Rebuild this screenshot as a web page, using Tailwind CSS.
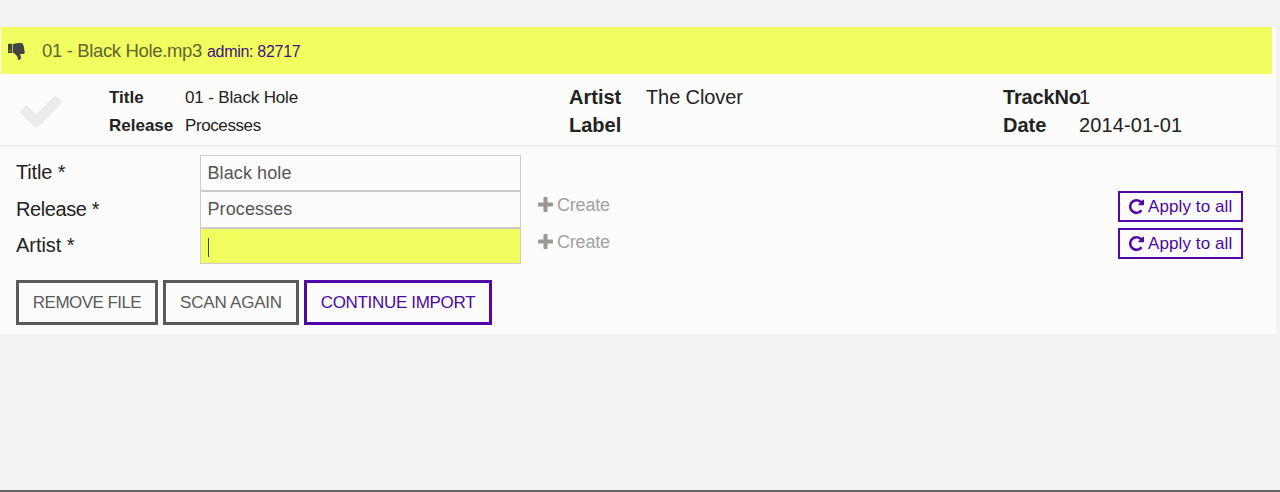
<!DOCTYPE html>
<html lang="en"><head><meta charset="utf-8"><title>Import</title>
<script src="https://cdn.jsdelivr.net/npm/@tailwindcss/browser@4"></script></head>
<body class="bg-[#f2f2f2] font-['Liberation_Sans',Arial,sans-serif] text-[#222] whitespace-nowrap">
<svg class="hidden">
<symbol id="check" viewBox="0 0 1792 1792"><path d="M1671 566q0 40-28 68l-724 724-136 136q-28 28-68 28t-68-28l-136-136-362-362q-28-28-28-68t28-68l136-136q28-28 68-28t68 28l294 295 656-657q28-28 68-28t68 28l136 136q28 28 28 68z"/></symbol>
<symbol id="plus" viewBox="192 128 1408 1408"><path d="M1600 736v192q0 40-28 68t-68 28h-416v416q0 40-28 68t-68 28h-192q-40 0-68-28t-28-68v-416h-416q-40 0-68-28t-28-68v-192q0-40 28-68t68-28h416v-416q0-40 28-68t68-28h192q40 0 68 28t28 68v416h416q40 0 68 28t28 68z"/></symbol>
<symbol id="repeat" viewBox="128 128 1536 1536"><path d="M1664 256v448q0 26-19 45t-45 19h-448q-42 0-59-40-17-39 14-69l138-138q-148-137-349-137-104 0-198.5 40.5t-163.5 109.5-109.5 163.5-40.5 198.5 40.5 198.5 109.5 163.5 163.5 109.5 198.5 40.5q119 0 225-52t179-147q7-10 23-12 15 0 25 9l137 138q9 8 9.5 20.5t-7.5 22.5q-109 132-264 204.5t-327 72.5q-156 0-298-61t-245-164-164-245-61-298 61-298 164-245 245-164 298-61q147 0 284.5 55.5t244.5 156.5l130-129q29-31 70-14 39 17 39 59z"/></symbol>
</svg>
<div class="flex h-[492px] flex-col border-b-2 border-[#646466] pt-[27px]">
  <main class="w-[1276px] bg-[#fcfcfc]">
    <header class="ml-px flex h-[47px] w-[1271px] items-center bg-[#f0ff5f] pl-[7px]">
      <svg class="mt-[2px] h-[17px] w-[17px]" viewBox="0 0 17 16" preserveAspectRatio="none" fill="#444"><path d="M0 1.2Q0 .6.6.6H4v8.9H.6Q0 9.500 0 8.900zM4.700.9C7 .9 8.500-.1 11 0h1.700c1.700 0 2.600.9 2.500 2.200.8.600.9 1.500.6 2.400.7.800.8 1.700.3 2.500 1.400 1.500.4 3.200-1.100 3.200h-3c.4 1.200 1 2.200.9 3.600 0 1.500-1 2.100-2.300 2-.9-.5-.7-1.700-1.100-2.800-.4-1.200-1.500-1.700-2.100-2.600C6.600 9.700 5.900 9.300 4.700 9.300z"/><path d="M1.200 6.700h1.500v1.500H1.200z" fill="#888a48"/></svg>
      <span class="ml-[17px] w-[165px] pt-px text-[18.5px] tracking-[-0.35px] text-[#62652f]">01 - Black Hole.mp3</span>
      <span class="mt-[2px] text-[16px] tracking-[-0.3px] text-[#45107e]">admin: 82717</span>
    </header>
    <section class="flex h-[73px] border-b-2 border-[#ededed] pt-[10px] leading-[27.500px]">
      <div class="w-[109px] pl-[17px]"><svg class="mt-[3px] h-[48px] w-[48px]" fill="#ebebeb"><use href="#check"/></svg></div>
      <dl class="grid h-[55px] w-[460px] grid-cols-[76px_1fr] text-[17px]">
        <dt class="font-bold">Title</dt><dd class="tracking-[-0.15px]">01 - Black Hole</dd>
        <dt class="font-bold">Release</dt><dd class="tracking-[-0.4px]">Processes</dd>
      </dl>
      <dl class="grid h-[55px] w-[434px] grid-cols-[77px_1fr] text-[20px]">
        <dt class="font-bold">Artist</dt><dd class="tracking-[-0.1px]">The Clover</dd>
        <dt class="font-bold">Label</dt><dd></dd>
      </dl>
      <dl class="grid h-[55px] grid-cols-[76px_1fr] text-[20px]">
        <dt class="font-bold tracking-[-0.15px]">TrackNo</dt><dd>1</dd>
        <dt class="font-bold">Date</dt><dd class="tracking-[0.1px]">2014-01-01</dd>
      </dl>
    </section>
    <form class="h-[187px] px-4 pt-[8px]">
      <div class="flex h-[36px]">
        <label class="w-[184px] text-[20px] leading-[35px] tracking-[-0.15px]">Title *</label>
        <div class="h-[36px] w-[321px] border border-[#ccc] pl-[6.500px] text-[18px] leading-[34px] tracking-[0.1px] text-[#555]">Black hole</div>
      </div>
      <div class="flex h-[37px]">
        <label class="w-[184px] pt-px text-[20px] leading-[35px] tracking-[-0.4px]">Release *</label>
        <div class="h-[37px] w-[321px] border border-[#ccc] pl-[6.500px] text-[18px] leading-[35px] tracking-[0.1px] text-[#555]">Processes</div>
        <span class="ml-[17px] flex h-[28px] items-center gap-[4px] text-[18px] tracking-[-0.2px] text-[#a2a2a2]"><svg class="mb-[2px] h-[15px] w-[15px]" fill="#999"><use href="#plus"/></svg>Create</span>
        <button type="button" class="mr-[17px] ml-auto flex h-[31px] w-[125px] items-center gap-[4px] border-2 border-[#5208a8] pl-[9px] text-[17px] tracking-[0.1px] text-[#4b0a9e]"><svg class="h-[15px] w-[15px]" fill="#5208a8"><use href="#repeat"/></svg>Apply to all</button>
      </div>
      <div class="flex h-[36px]">
        <label class="w-[184px] text-[20px] leading-[35px] tracking-[-0.05px]">Artist *</label>
        <div class="flex h-[36px] w-[321px] items-center border border-[#ccc] bg-[#f0ff5f] pl-[7px]"><i class="mt-[2px] h-[19px] w-px bg-[#444]"></i></div>
        <span class="ml-[17px] flex h-[28px] items-center gap-[4px] text-[18px] tracking-[-0.2px] text-[#a2a2a2]"><svg class="mb-[2px] h-[15px] w-[15px]" fill="#999"><use href="#plus"/></svg>Create</span>
        <button type="button" class="mr-[17px] ml-auto flex h-[31px] w-[125px] items-center gap-[4px] border-2 border-[#5208a8] pl-[9px] text-[17px] tracking-[0.1px] text-[#4b0a9e]"><svg class="h-[15px] w-[15px]" fill="#5208a8"><use href="#repeat"/></svg>Apply to all</button>
      </div>
      <div class="mt-[16px] flex text-[17px] text-[#5a5a5a]">
        <button type="button" class="h-[45px] w-[142px] border-3 border-[#5a5a5a] tracking-[-0.55px]">REMOVE FILE</button>
        <button type="button" class="ml-[5px] h-[45px] w-[136px] border-3 border-[#5a5a5a] tracking-[-0.2px]">SCAN AGAIN</button>
        <button type="button" class="ml-[5px] h-[45px] w-[188px] border-3 border-[#5208a8] tracking-[-0.32px] text-[#4b0a9e]">CONTINUE IMPORT</button>
      </div>
    </form>
  </main>
</div>
</body></html>
